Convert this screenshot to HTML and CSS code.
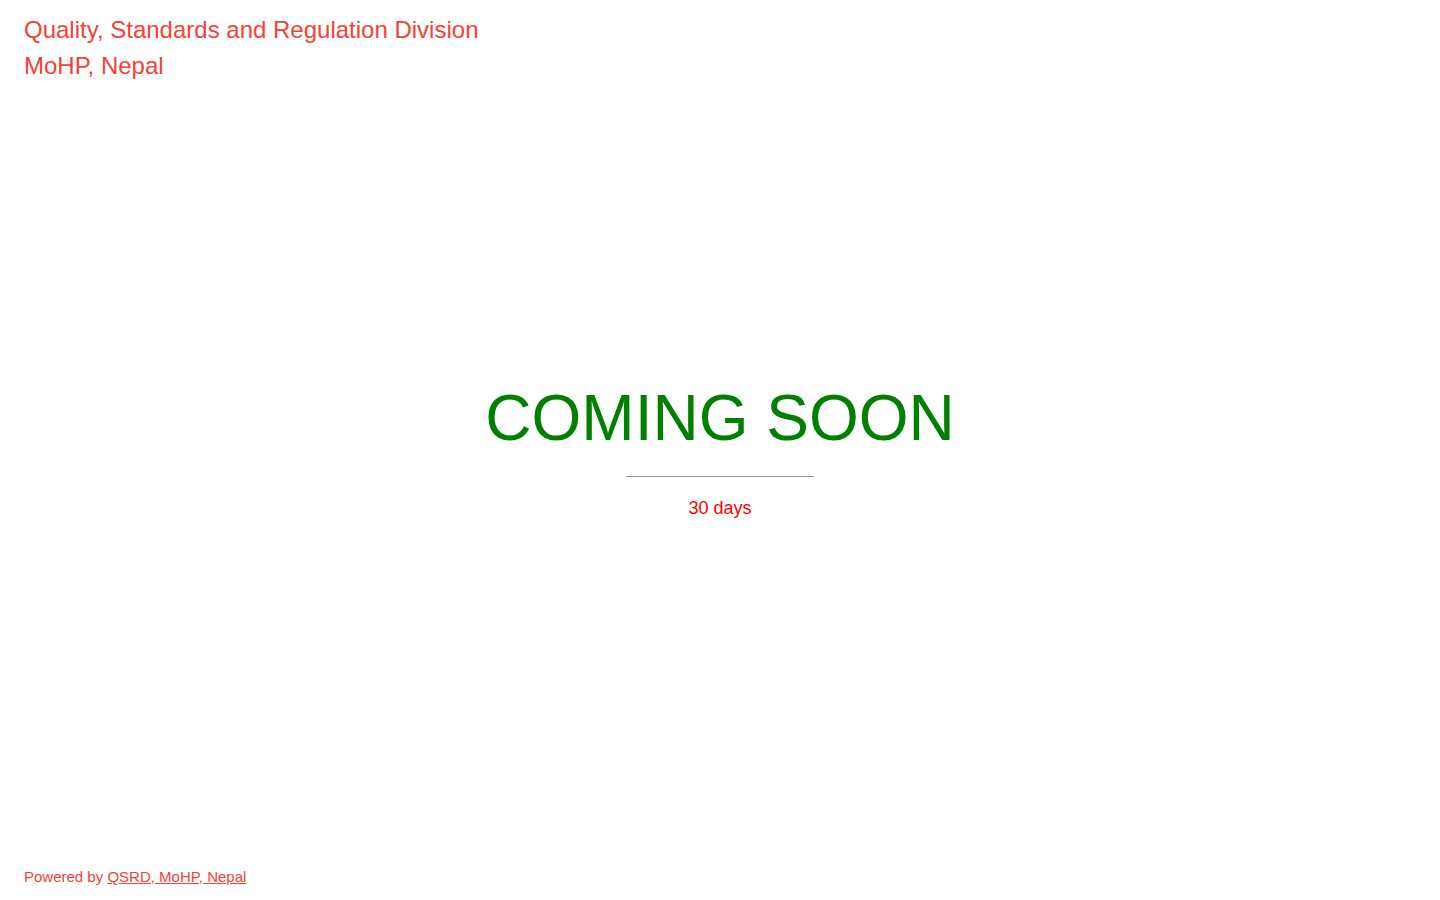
FILE: index.html
```html
<!DOCTYPE html>
<html lang="en">
<head>
<meta charset="utf-8">
<title>Coming Soon</title>
<link rel="stylesheet" href="styles.css">
</head>
<body>
<div class="page">
  <header class="topleft">
    <div>Quality, Standards and Regulation Division</div>
    <div>MoHP, Nepal</div>
  </header>
  <main class="middle">
    <h1 class="title">COMING SOON</h1>
    <hr class="rule">
    <p class="days">30 days</p>
  </main>
  <footer class="bottomleft">
    <p>Powered by <a href="#" class="link">QSRD, MoHP, Nepal</a></p>
  </footer>
</div>
</body>
</html>
```
FILE: styles.css
```css
html, body {
  margin: 0;
  padding: 0;
  height: 100%;
  background: #fff;
}
body {
  font-family: "Liberation Sans", Arial, sans-serif;
  color: #f44336;
}
.page {
  box-sizing: border-box;
  height: 100vh;
  padding: 12px 24px 11px;
  display: grid;
  grid-template-rows: 1fr auto 1fr;
}
.topleft {
  align-self: start;
  font-size: 24px;
  line-height: 36px;
}
.middle {
  text-align: center;
  padding-top: 6px;
}
.title {
  margin: 0;
  font-size: 64px;
  line-height: 64px;
  font-weight: normal;
  color: #008000;
}
.rule {
  width: 188px;
  margin: 26px auto 0;
  border: 0;
  border-top: 1px solid #999;
  height: 0;
}
.days {
  margin: 18px 0 0;
  font-size: 18px;
  line-height: 27px;
  color: #ff0000;
}
.bottomleft {
  align-self: end;
  font-size: 15px;
  line-height: 24px;
}
.bottomleft p {
  margin: 0;
}
.link {
  color: #f44336;
  text-decoration: underline;
}
```
